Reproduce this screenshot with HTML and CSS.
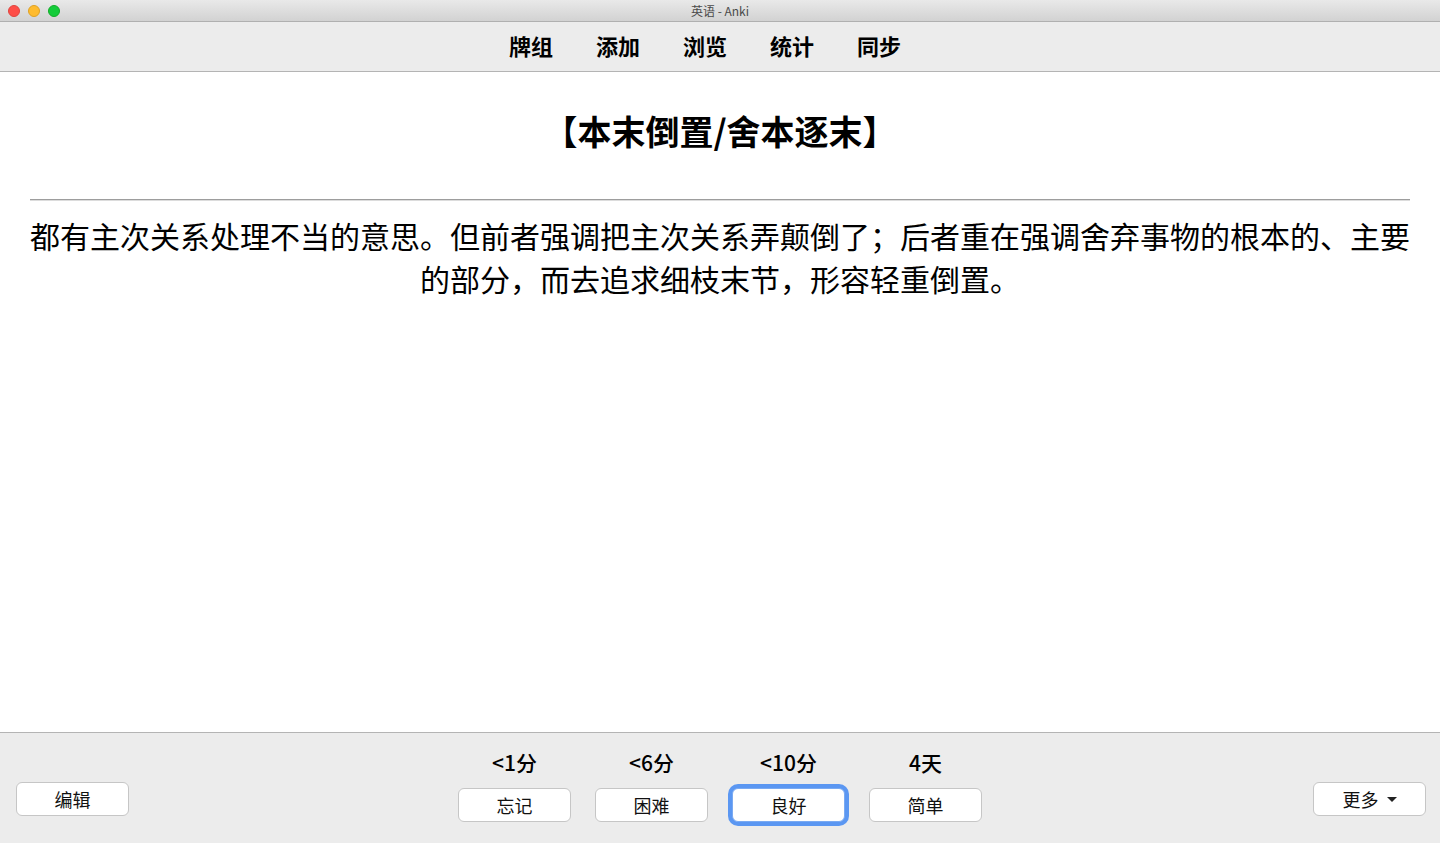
FILE: index.html
```html
<!DOCTYPE html>
<html lang="zh-CN">
<head>
  <meta charset="UTF-8">
  <title>英语 - Anki</title>
  <link rel="stylesheet" href="styles.css">
</head>
<body>
  <div class="window">
    <!-- Title bar -->
    <div class="titlebar">
      <div class="lights">
        <span class="light red"></span>
        <span class="light yellow"></span>
        <span class="light green"></span>
      </div>
      <div class="window-title">英语 - Anki</div>
    </div>

    <!-- Toolbar -->
    <div class="toolbar">
      <a class="toolbar-link">牌组</a>
      <a class="toolbar-link">添加</a>
      <a class="toolbar-link">浏览</a>
      <a class="toolbar-link">统计</a>
      <a class="toolbar-link">同步</a>
    </div>

    <!-- Card -->
    <div class="card">
      <div class="card-front">【本末倒置/舍本逐末】</div>
      <hr class="answer-line">
      <div class="card-back">都有主次关系处理不当的意思。但前者强调把主次关系弄颠倒了；后者重在强调舍弃事物的根本的、主要的部分，而去追求细枝末节，形容轻重倒置。</div>
    </div>

    <!-- Bottom bar -->
    <div class="bottombar">
      <div class="side left">
        <button class="btn side-btn">编辑</button>
      </div>
      <div class="answers">
        <div class="answer">
          <div class="due">&lt;1分</div>
          <button class="btn">忘记</button>
        </div>
        <div class="answer">
          <div class="due">&lt;6分</div>
          <button class="btn">困难</button>
        </div>
        <div class="answer">
          <div class="due">&lt;10分</div>
          <button class="btn focused">良好</button>
        </div>
        <div class="answer">
          <div class="due">4天</div>
          <button class="btn">简单</button>
        </div>
      </div>
      <div class="side right">
        <button class="btn side-btn">更多 <span class="caret"></span></button>
      </div>
    </div>
  </div>
</body>
</html>
```

FILE: styles.css
```css
/* =====================
   Variables
   ===================== */
:root {
  --chrome-bg: #ececec;
  --chrome-border: #b4b4b4;
  --text-color: #000;
  --button-border: #c6c6c6;
  --focus-ring: #5b97f2;
  --cjk: "Noto Sans CJK SC", "Liberation Sans", sans-serif;
}

/* =====================
   Global
   ===================== */
html, body {
  margin: 0;
  padding: 0;
  height: 100%;
}

body {
  font-family: var(--cjk);
  color: var(--text-color);
  background: var(--chrome-bg);
}

.window {
  display: flex;
  flex-direction: column;
  height: 100vh;
  overflow: hidden;
}

/* =====================
   Title bar
   ===================== */
.titlebar {
  height: 21px;
  flex: none;
  display: flex;
  align-items: center;
  position: relative;
  background: linear-gradient(#e9e9e9, #d2d2d2);
  border-bottom: 1px solid #b0b0b0;
}

.lights {
  display: flex;
  gap: 8px;
  padding-left: 8px;
}

.light {
  width: 12px;
  height: 12px;
  border-radius: 50%;
  box-sizing: border-box;
}

.light.red {
  background: #fe4e48;
  border: 1px solid #e0443e;
}

.light.yellow {
  background: #febb2e;
  border: 1px solid #dea123;
}

.light.green {
  background: #14cc3a;
  border: 1px solid #12ac28;
}

.window-title {
  position: absolute;
  left: 0;
  right: 0;
  text-align: center;
  font-size: 12px;
  line-height: 21px;
  color: #4a4a4a;
}

/* =====================
   Toolbar
   ===================== */
.toolbar {
  height: 50px;
  flex: none;
  display: flex;
  justify-content: center;
  align-items: center;
  gap: 43px;
  padding-right: 30px;
  padding-bottom: 3px;
  box-sizing: border-box;
  background: var(--chrome-bg);
  border-bottom: 1px solid var(--chrome-border);
}

.toolbar-link {
  font-size: 22px;
  font-weight: 700;
  line-height: 30px;
  color: #000;
  cursor: pointer;
}

/* =====================
   Card
   ===================== */
.card {
  flex: 1;
  background: #fff;
  padding: 0 30px;
  text-align: center;
}

.card-front {
  margin-top: 39px;
  font-size: 34px;
  font-weight: 700;
  line-height: 40px;
}

.answer-line {
  margin: 48px 0 0;
  height: 0;
  border: none;
  border-top: 1px solid #9d9d9d;
  border-bottom: 1px solid #dcdcdc;
}

.card-back {
  margin-top: 13px;
  font-size: 30px;
  line-height: 43px;
}

/* =====================
   Bottom bar
   ===================== */
.bottombar {
  height: 110px;
  flex: none;
  display: grid;
  grid-template-columns: 1fr auto 1fr;
  align-items: start;
  background: var(--chrome-bg);
  border-top: 1px solid var(--chrome-border);
}

.side {
  display: flex;
  padding-top: 49px;
}

.side.left {
  padding-left: 16px;
}

.side.right {
  justify-content: flex-end;
  padding-right: 14px;
}

.answers {
  display: flex;
  gap: 24px;
  padding-top: 17px;
}

.answer {
  display: flex;
  flex-direction: column;
  align-items: center;
  gap: 14px;
}

.due {
  font-size: 21px;
  font-weight: 500;
  line-height: 24px;
}

.btn {
  width: 113px;
  height: 34px;
  box-sizing: border-box;
  background: #fff;
  border: 1px solid var(--button-border);
  border-radius: 6px;
  font-family: var(--cjk);
  font-size: 18px;
  line-height: 1;
  color: #111;
  padding: 0;
  display: flex;
  align-items: center;
  justify-content: center;
}

.btn.focused {
  border-color: #7aaaf2;
  box-shadow: 0 0 0 4px var(--focus-ring);
}

.caret {
  display: inline-block;
  width: 0;
  height: 0;
  margin-left: 8px;
  border-left: 5px solid transparent;
  border-right: 5px solid transparent;
  border-top: 5px solid #222;
}
```
